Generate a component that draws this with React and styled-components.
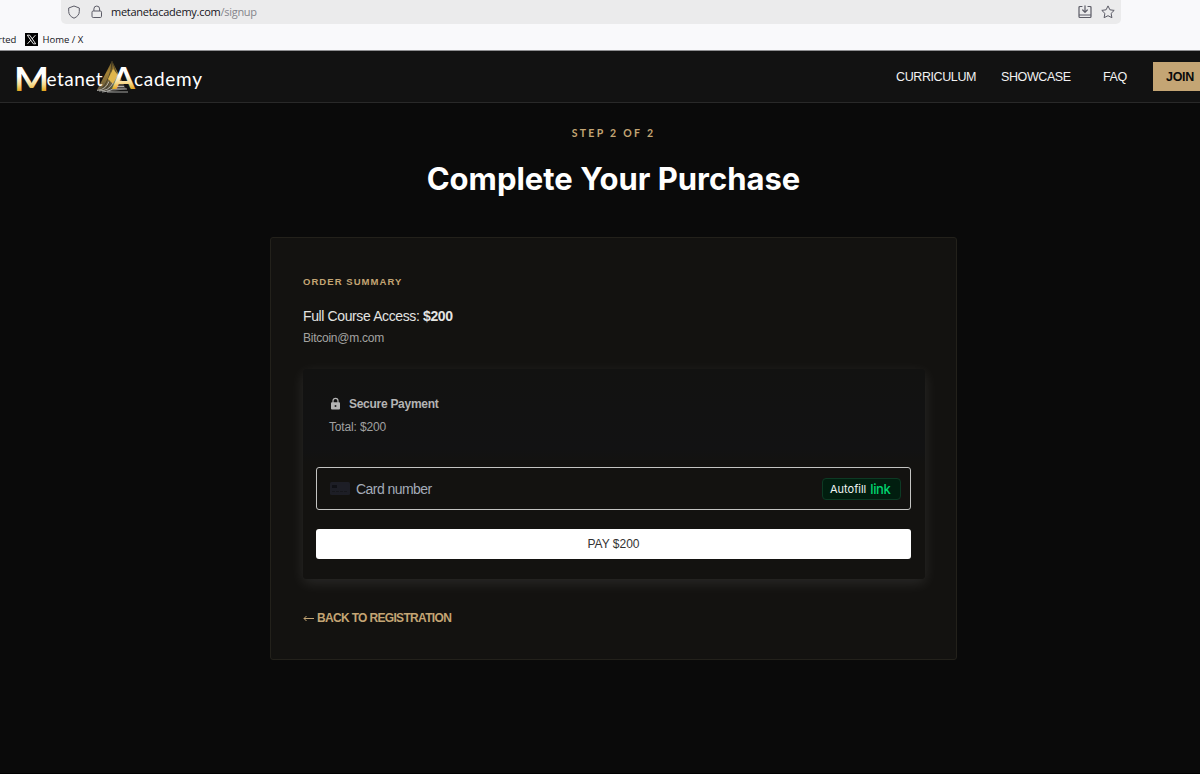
import styled, { createGlobalStyle } from 'styled-components';

const GlobalStyles = createGlobalStyle`
  :root {
    --gold: #c4a574;
    --ink: #0a0a0a;
    --panel: #131210;
    --sans: 'Liberation Sans', Arial, sans-serif;
    --system: 'Open Sans', 'Noto Sans', sans-serif;
  }

  * {
    box-sizing: border-box;
  }

  body {
    margin: 0;
    background: var(--ink);
    font-family: var(--sans);
    overflow: hidden;
  }

  h1, h2, p {
    margin: 0;
  }
`;

const WindowStyles = styled.div`
  width: 1200px;
  height: 774px;
  display: flex;
  flex-direction: column;
  overflow: hidden;
  border-bottom: 1px solid #000;
`;

const BrowserStyles = styled.div`
  height: 51px;
  flex: none;
  background: #f9f9fb;
  border-bottom: 1px solid #8f8f92;
  font-family: var(--system);
`;

const AddressBar = styled.div`
  width: 1060px;
  height: 24px;
  margin-left: 61px;
  padding: 0 6px;
  display: flex;
  align-items: center;
  background: #ebebec;
  border-radius: 0 0 5px 5px;
  color: #5b5b66;

  svg {
    flex: none;
  }

  svg + svg {
    margin-left: 9px;
  }
`;

const Url = styled.span`
  flex: 1;
  margin-left: 7px;
  font-size: 11px;
  line-height: 24px;
  letter-spacing: -0.27px;
  color: #85858b;

  b {
    font-weight: 400;
    color: #15141a;
  }
`;

const Bookmarks = styled.div`
  height: 26px;
  display: flex;
  align-items: center;
  padding-top: 4px;
  margin-left: -2px;
  color: #15141a;
  font-size: 9.5px;
  white-space: nowrap;

  svg {
    margin: 0 4px 0 9px;
  }
`;

const NavStyles = styled.nav`
  height: 52px;
  flex: none;
  display: flex;
  align-items: center;
  background: #121212;
  border-bottom: 1px solid #292929;
`;

const LogoSvg = styled.svg`
  display: block;
  margin-left: 12px;
  margin-right: auto;
`;

const NavLink = styled.a`
  width: ${(props) => props.$width}px;
  margin-right: ${(props) => props.$gap}px;
  font-size: 12.5px;
  line-height: 20px;
  letter-spacing: -0.4px;
  white-space: nowrap;
  color: #f2f2f2;
`;

const JoinButton = styled.a`
  width: 47px;
  height: 29px;
  padding-left: 13px;
  background: var(--gold);
  color: #0a0a0a;
  font-size: 12.5px;
  font-weight: 700;
  line-height: 30px;
  letter-spacing: -0.3px;
  white-space: nowrap;
`;

const MainStyles = styled.main`
  width: 687px;
  margin-left: 270px;
  padding-top: 23px;
  display: flex;
  flex-direction: column;
`;

const Step = styled.p`
  height: 14px;
  text-align: center;
  color: var(--gold);
  font-family: Lato, sans-serif;
  font-size: 10.5px;
  font-weight: 700;
  line-height: 15px;
  letter-spacing: 2.3px;
`;

const Title = styled.h1`
  margin-top: 19px;
  text-align: center;
  color: #fff;
  font-family: Inter, sans-serif;
  font-size: 31px;
  font-weight: 700;
  line-height: 40px;
`;

const CardStyles = styled.section`
  height: 423px;
  margin-top: 38px;
  padding: 37px 32px 0;
  background: var(--panel);
  border: 1px solid #23211b;
  border-radius: 3px;
`;

const SummaryTitle = styled.h2`
  color: var(--gold);
  font-size: 9.5px;
  font-weight: 700;
  line-height: 14px;
  letter-spacing: 1.05px;
`;

const SummaryLine = styled.p`
  margin-top: 17px;
  color: #e4e4e2;
  font-size: 14px;
  line-height: 20px;
  letter-spacing: -0.38px;
`;

const Email = styled.p`
  margin-top: 4px;
  color: #a3a3a1;
  font-size: 12px;
  line-height: 16px;
  letter-spacing: -0.25px;
`;

const PaymentStyles = styled.div`
  width: 622px;
  height: 210px;
  margin-top: 23px;
  padding: 20px 14px 0 13px;
  display: flex;
  flex-direction: column;
  background: linear-gradient(#121211, #121213 38%, #131210 45%, #131210);
  border-radius: 4px;
  box-shadow: 0 4px 14px rgba(255, 255, 255, 0.1);
`;

const PaymentHead = styled.div`
  height: 78px;
  padding-left: 13px;
  color: #b4b4b4;
  font-size: 12px;
  line-height: 16px;

  div {
    height: 30px;
    display: flex;
    align-items: center;
    font-weight: 700;
    letter-spacing: -0.28px;
  }

  svg {
    margin: 0 8px 0 1px;
  }

  p {
    color: #a0a0a0;
    letter-spacing: -0.15px;
  }
`;

const CardField = styled.div`
  height: 43px;
  padding: 0 9px 0 13px;
  display: flex;
  align-items: center;
  border: 1px solid #c4c4c2;
  border-radius: 3px;
  color: #a3abb8;
  font-size: 14px;
  letter-spacing: -0.55px;

  > span {
    flex: 1;
    margin-left: 6px;
  }
`;

const AutofillButton = styled.button`
  width: 79px;
  height: 22px;
  padding: 0 0 0 7px;
  display: flex;
  align-items: center;
  border: 1px solid #0d3a24;
  border-radius: 4px;
  background: #011e0f;
  color: #f0f4f2;
  font-family: Inter, sans-serif;
  font-size: 11px;
  white-space: nowrap;

  strong {
    margin-left: 4px;
    color: #00d66f;
    font-size: 13px;
    font-weight: 500;
    letter-spacing: -0.35px;
  }
`;

const PayButton = styled.button`
  height: 30px;
  margin-top: 19px;
  border: 0;
  border-radius: 3px;
  background: #fff;
  color: #333;
  font-family: var(--sans);
  font-size: 12px;
`;

const BackLink = styled.a`
  display: block;
  margin-top: 30px;
  color: var(--gold);
  font-size: 12px;
  font-weight: 700;
  line-height: 18px;
  letter-spacing: -0.67px;
  white-space: nowrap;

  svg {
    margin-right: 3px;
    vertical-align: -2px;
  }
`;

function Browser() {
  return (
    <BrowserStyles>
      <AddressBar>
        <svg width="14" height="14" viewBox="0 0 14 14" fill="none" stroke="currentColor" strokeLinejoin="round">
          <path d="M7 1 12.300 3v3.500c0 3-2.100 5.400-5.300 6.700C3.800 11.900 1.700 9.500 1.700 6.500V3Z" />
        </svg>
        <svg width="14" height="14" viewBox="0 0 14 14" fill="none" stroke="currentColor">
          <rect x="2" y="6" width="9.500" height="6.500" rx="1.200" />
          <path d="M3.900 6V3.900a2.850 2.850 0 0 1 5.700 0V6" />
        </svg>
        <Url>
          <b>metanetacademy.com</b>/signup
        </Url>
        <svg width="14" height="14" viewBox="0 0 14 14" fill="none" stroke="currentColor" strokeWidth="1.2" strokeLinecap="round" strokeLinejoin="round">
          <path d="M4 1.500H2q-1 0-1 1v9q0 1 1 1h10q1 0 1-1v-9q0-1-1-1h-2M1 10h12M7 .8v6.400M4.700 5 7 7.300 9.300 5" />
        </svg>
        <svg width="14" height="14" viewBox="0 0 14 14" fill="none" stroke="currentColor" strokeLinejoin="round">
          <path d="m7 .9 1.900 3.900 4.300.6-3.100 3 .8 4.300L7 10.700l-3.900 2 .8-4.300-3.100-3 4.300-.6Z" />
        </svg>
      </AddressBar>
      <Bookmarks>
        rted
        <svg width="13" height="13" viewBox="0 0 13 13">
          <rect width="13" height="13" fill="#000" />
          <path d="M2.300 2.200h2.400l6 8.600H8.300ZM10.400 2.200 7.100 5.900M5.800 7.200l-3.300 3.600" fill="none" stroke="#fff" strokeWidth=".9" />
        </svg>
        Home / X
      </Bookmarks>
    </BrowserStyles>
  );
}

function Logo() {
  return (
    <LogoSvg width="194" height="40" viewBox="0 0 194 40" fontFamily="Lato, sans-serif">
      <defs>
        <linearGradient id="letter" x1="0" y1="0" x2="0" y2="1">
          <stop offset=".45" stopColor="#fff" />
          <stop offset=".66" stopColor="#f6d98b" />
          <stop offset=".82" stopColor="#e3a51d" />
        </linearGradient>
        <linearGradient id="pyramid" x1="0" y1="0" x2=".3" y2="1">
          <stop offset="0" stopColor="#5a4a26" />
          <stop offset=".45" stopColor="#a58335" />
          <stop offset="1" stopColor="#4a4844" />
        </linearGradient>
      </defs>
      <path d="M100 4 85 33l12 2 17-3Z" fill="url(#pyramid)" />
      <path d="M100 4q-1 18-11 29M100 4q1 18-7 30M100 4l5 14" fill="none" stroke="#36301f" strokeWidth=".7" />
      <path d="M101 12 106 18 101 27 96 22Z" fill="#e0b64c" />
      <path d="M85 33.500q9-1 12-9M87 34q10 0 14-8M90 35q10-1 13-5M95 35h21M101 32h14M103 29.500h9" fill="none" stroke="#c9c9c5" strokeWidth=".8" />
      <text x="2" y="34" fontSize="32" fontWeight="700" textLength="35" lengthAdjust="spacingAndGlyphs" fill="url(#letter)">M</text>
      <text x="34.500" y="28.500" fontSize="19" textLength="56" fill="#fff">etanet</text>
      <text x="100" y="32" fontSize="31" fontWeight="700" textLength="23" lengthAdjust="spacingAndGlyphs" fill="url(#letter)">A</text>
      <text x="122" y="28.500" fontSize="19" textLength="68" fill="#fff">cademy</text>
    </LogoSvg>
  );
}

function Nav() {
  return (
    <NavStyles>
      <Logo />
      <NavLink $width={79} $gap={26}>CURRICULUM</NavLink>
      <NavLink $width={69} $gap={33}>SHOWCASE</NavLink>
      <NavLink $width={24} $gap={26}>FAQ</NavLink>
      <JoinButton>JOIN</JoinButton>
    </NavStyles>
  );
}

function Payment() {
  return (
    <PaymentStyles>
      <PaymentHead>
        <div>
          <svg width="11" height="14" viewBox="0 0 11 14">
            <path d="M3 6V3.800a2.500 2.500 0 0 1 5 0V6" fill="none" stroke="currentColor" strokeWidth="1.200" />
            <rect x="1" y="5.300" width="9" height="7.200" rx="1" fill="currentColor" />
            <circle cx="5.500" cy="8.900" r="1" fill="#222" />
          </svg>
          Secure Payment
        </div>
        <p>Total: $200</p>
      </PaymentHead>
      <CardField>
        <svg width="20" height="13" viewBox="0 0 20 13">
          <rect width="20" height="13" rx="1.500" fill="#1d1e26" />
          <rect x="2" y="3" width="5" height="3" rx=".5" fill="#101116" />
          <path d="M2 9.500h16" stroke="#16171c" strokeDasharray="3 1" />
        </svg>
        <span>Card number</span>
        <AutofillButton>
          Autofill <strong>link</strong>
        </AutofillButton>
      </CardField>
      <PayButton>PAY $200</PayButton>
    </PaymentStyles>
  );
}

export default function App() {
  return (
    <WindowStyles>
      <GlobalStyles />
      <Browser />
      <Nav />
      <MainStyles>
        <Step>STEP 2 OF 2</Step>
        <Title>Complete Your Purchase</Title>
        <CardStyles>
          <SummaryTitle>ORDER SUMMARY</SummaryTitle>
          <SummaryLine>
            Full Course Access: <strong>$200</strong>
          </SummaryLine>
          <Email>Bitcoin@m.com</Email>
          <Payment />
          <BackLink>
            <svg width="11" height="12" viewBox="0 0 11 12" fill="none" stroke="currentColor">
              <path d="M11 6.500H1M3.500 4 1 6.500 3.500 9" />
            </svg>
            BACK TO REGISTRATION
          </BackLink>
        </CardStyles>
      </MainStyles>
    </WindowStyles>
  );
}
